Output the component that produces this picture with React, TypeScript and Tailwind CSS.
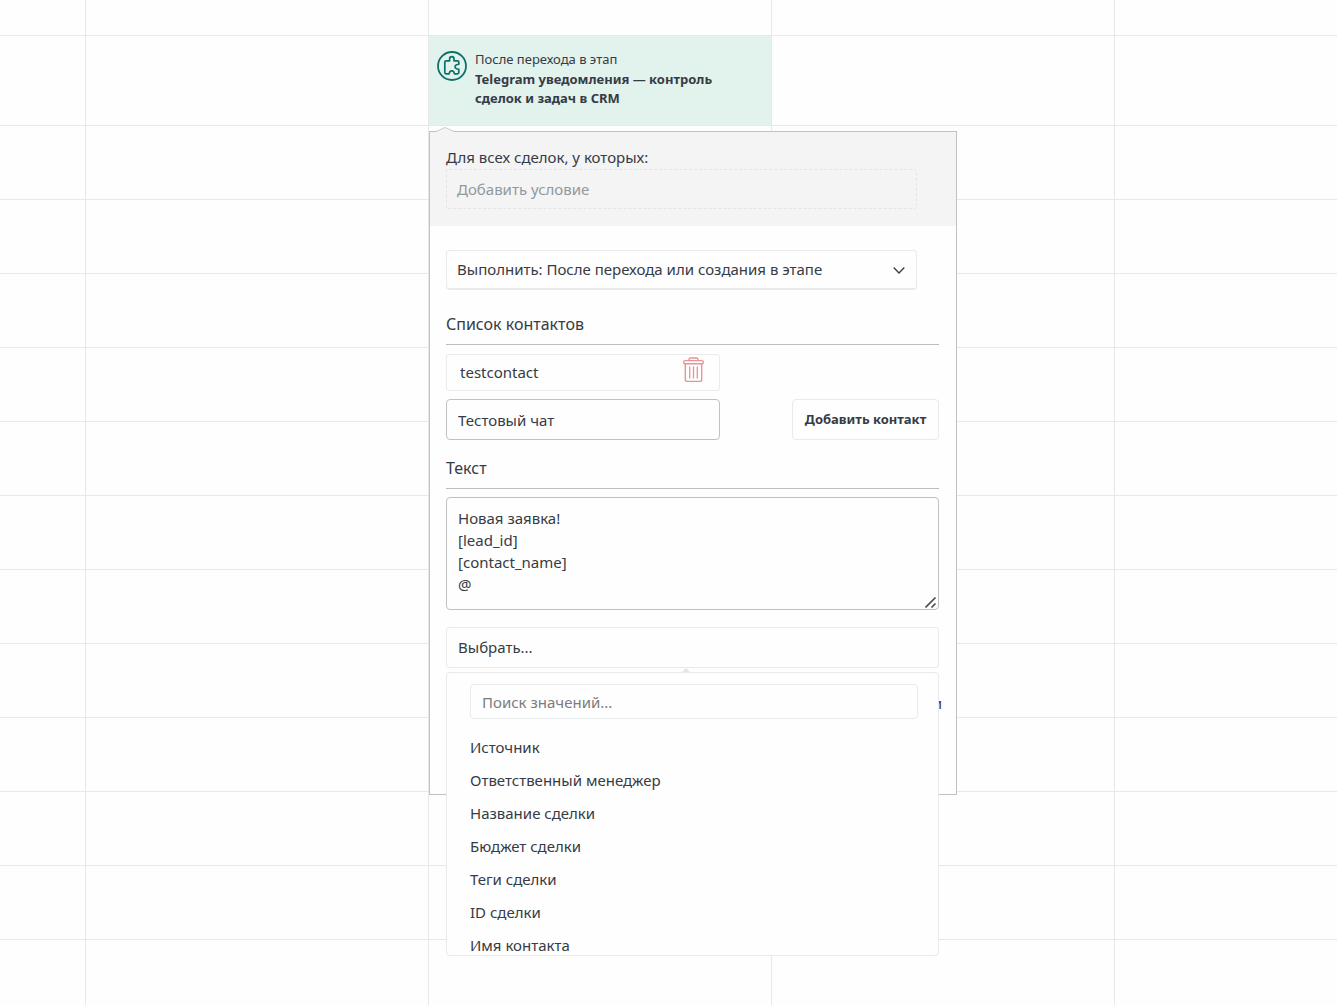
import React, { useState } from 'react';

const VALUES = [
  'Источник',
  'Ответственный менеджер',
  'Название сделки',
  'Бюджет сделки',
  'Теги сделки',
  'ID сделки',
  'Имя контакта',
];

const ROWS = 11;

const PuzzleIcon = () => (
  <svg width="30" height="30" viewBox="0 0 30 30" fill="none" stroke="#0c7268" className="shrink-0">
    <circle cx="15" cy="15" r="14" strokeWidth="1.8" />
    <path
      strokeWidth="1.7"
      strokeLinejoin="round"
      d="M7.8 11 q0-1.2 1.2-1.2 H12.6 V8 q0-2.4 2.2-2.4 t2.2 2.4 V9.8 H20.6 q1.2 0 1.2 1.2 V13.2 L19.6 13.8 q-1.6 0.6-1.6 2 t1.6 2 L21.8 18.4 V21.6 q0 1.2-1.2 1.2 H17.6 L16.6 20.6 q-0.6-0.8-1.8-0.8 t-1.8 0.8 L12 22.8 H9 q-1.2 0-1.2-1.2 Z"
    />
  </svg>
);

const TrashIcon = () => (
  <svg width="21" height="26" viewBox="0 0 21 26" fill="none" stroke="#e79494" strokeWidth="1.4">
    <path d="M6 3.5 V2.5 q0-1.5 1.5-1.5 h6 q1.5 0 1.5 1.5 v1" />
    <rect x="0.7" y="3.6" width="19.6" height="3.2" rx="1.4" />
    <path d="M2.3 7 V22.4 q0 2 2 2 h12.4 q2 0 2-2 V7" />
    <path d="M6.7 9.5 v12 M10.5 9.5 v12 M14.3 9.5 v12" strokeWidth="1.3" />
  </svg>
);

// One pipeline stage: header cell, trigger cell, then empty slots
const Stage = ({ className, children }: { className: string; children?: React.ReactNode }) => (
  <div className={`flex flex-col border-[#e8e8e8] ${className}`}>
    <div className="h-9 shrink-0 border-b border-[#e8e8e8]" />
    <div className="relative h-[90px] shrink-0 border-b border-[#e8e8e8]">{children}</div>
    {Array.from({ length: ROWS }, (_, i) => (
      <div key={i} className="h-[74px] shrink-0 border-b border-[#e8e8e8]" />
    ))}
    <div className="flex-1" />
  </div>
);

const SectionTitle = ({ children }: { children: React.ReactNode }) => (
  <h3 className="border-b border-[#babcbe] pb-[9px] text-base leading-[22px]">{children}</h3>
);

const TriggerPopup = () => {
  const [contact, setContact] = useState('Тестовый чат');
  const [message, setMessage] = useState('Новая заявка!\n[lead_id]\n[contact_name]\n@');
  const [search, setSearch] = useState('');

  const values = VALUES.filter((v) => v.toLowerCase().includes(search.toLowerCase()));

  return (
    <div className="absolute left-0 top-[95px] z-10 w-[528px] border border-[#bfc1c3] bg-[#fefefe]">
      <svg width="18" height="6" viewBox="0 0 18 6" className="absolute -top-[5px] left-[6px]">
        <path d="M0 5 L9 0.5 L18 5 V6 H0 Z" fill="#f4f4f4" />
        <path d="M0 4.5 L9 0.5 L18 4.5" fill="none" stroke="#c9cbcc" />
      </svg>

      {/* Conditions */}
      <div className="bg-[#f4f4f4] pb-[17px] pl-4 pr-[39px] pt-[14px]">
        <p className="leading-[23px]">Для всех сделок, у которых:</p>
        <button className="block h-10 w-full rounded-[3px] border border-dashed border-[#e3e4e5] px-[10px] text-left text-[#92989b]">
          Добавить условие
        </button>
      </div>

      <div className="pb-20 pl-4 pr-[17px] pt-6">
        <div className="relative mr-[22px]">
          <select
            aria-label="Выполнить"
            className="block h-10 w-full appearance-none rounded-[4px] border border-b-2 border-[#e8eaeb] bg-[#fefefe] px-[10px]"
          >
            <option>Выполнить: После перехода или создания в этапе</option>
          </select>
          <svg
            width="12"
            height="8"
            viewBox="0 0 12 8"
            className="pointer-events-none absolute right-3 top-4"
            fill="none"
            stroke="#363b44"
            strokeWidth="1.3"
          >
            <path d="M0.7 1.5 L6 7 L11.3 1.5" />
          </svg>
        </div>

        {/* Contacts */}
        <div className="mt-[23px]">
          <SectionTitle>Список контактов</SectionTitle>
          <div className="mt-[9px] flex h-[37px] w-[274px] justify-between rounded-[3px] border border-[#ebebeb] pl-[13px] pr-[15px]">
            <span className="leading-[35px]">testcontact</span>
            <button aria-label="Удалить" className="self-start pt-[2px]">
              <TrashIcon />
            </button>
          </div>
          <div className="mt-2 flex justify-between">
            <input
              aria-label="Контакт"
              value={contact}
              onChange={(e) => setContact(e.target.value)}
              className="h-[41px] w-[274px] rounded-[4px] border border-[#bfc1c3] px-[11px]"
            />
            <button className="h-[41px] w-[147px] rounded-[4px] border border-[#e8eaeb] text-[13px] font-bold">
              Добавить контакт
            </button>
          </div>
        </div>

        {/* Message */}
        <div className="mt-[17px]">
          <SectionTitle>Текст</SectionTitle>
          <div className="relative mt-2">
            <textarea
              aria-label="Текст"
              value={message}
              onChange={(e) => setMessage(e.target.value)}
              className="block h-[113px] w-full resize-none rounded-[4px] border border-[#bfc1c3] px-[11px] py-[9px] leading-[22px]"
            />
            <svg
              width="12"
              height="12"
              viewBox="0 0 12 12"
              className="pointer-events-none absolute bottom-[2px] right-[2px]"
              stroke="#4a4a4a"
              strokeWidth="1.6"
            >
              <path d="M0.5 11.5 L10.5 1.5 M6.5 11.5 L10.5 7.5" />
            </svg>
          </div>
        </div>

        {/* Field picker */}
        <div className="relative mt-[17px]">
          <button className="block h-[41px] w-full rounded-[3px] border border-[#e8eaeb] px-[11px] text-left">
            Выбрать...
          </button>
          <div className="absolute inset-x-0 top-full z-10 mt-1 h-[284px] rounded-[4px] border border-[#e8eaeb] bg-[#fefefe]">
            <svg width="8" height="4" viewBox="0 0 8 4" className="absolute -top-[5px] left-[235px]">
              <path d="M0 4 L4 0 L8 4 Z" fill="#e4e5e6" />
            </svg>
            <div className="h-full overflow-hidden pl-[23px] pr-5 pt-[11px]">
              <input
                aria-label="Поиск значений"
                placeholder="Поиск значений..."
                value={search}
                onChange={(e) => setSearch(e.target.value)}
                className="block h-[35px] w-full rounded-[4px] border border-[#e8eaeb] px-[11px] placeholder:text-[#7c7c7c]"
              />
              <ul className="mt-3">
                {values.map((value) => (
                  <li key={value}>
                    <button className="block h-[33px] w-full text-left">{value}</button>
                  </li>
                ))}
              </ul>
            </div>
          </div>
        </div>

        <p className="-mr-[3px] mt-6 text-right leading-[22px]">и</p>
      </div>
    </div>
  );
};

const App = () => {
  return (
    <div className="flex min-h-screen overflow-hidden bg-[#fefefe] font-['Noto_Sans',sans-serif] text-[15px] text-[#363b44]">
      <Stage className="w-[86px] shrink-0 border-r" />
      <Stage className="w-[343px] shrink-0 border-r" />
      <Stage className="w-[343px] shrink-0 border-r">
        <div className="flex h-full gap-2 bg-[#e2f2ec] pl-2 pr-4 pt-[15px]">
          <PuzzleIcon />
          <div>
            <p className="text-[13px] leading-4">После перехода в этап</p>
            <p className="mt-[3px] text-[13px] font-bold leading-[19px]">
              Telegram уведомления — контроль сделок и задач в CRM
            </p>
          </div>
        </div>
        <TriggerPopup />
      </Stage>
      <Stage className="w-[343px] shrink-0 border-r" />
      <Stage className="flex-1" />
    </div>
  );
};

export default App;
